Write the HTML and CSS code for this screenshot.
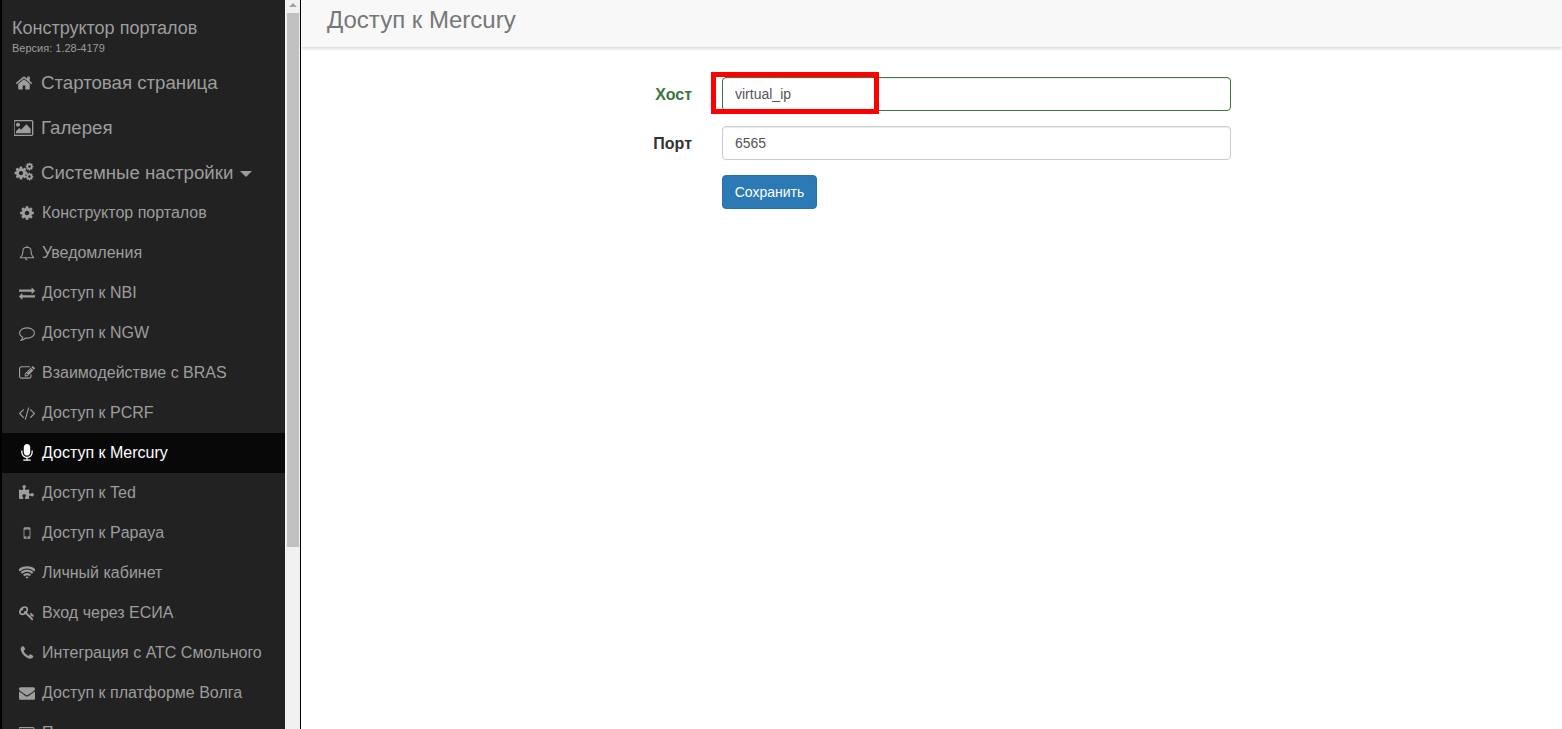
FILE: index.html
```html
<!DOCTYPE html>
<html lang="ru">
<head>
<meta charset="utf-8">
<title>Доступ к Mercury</title>
<link rel="stylesheet" href="styles.css">
</head>
<body>
<svg class="defs" xmlns="http://www.w3.org/2000/svg">
<symbol id="i-home" viewBox="0 0 1792 1792"><path d="M1472 992v480q0 26-19 45t-45 19h-384v-384h-256v384h-384q-26 0-45-19t-19-45v-480q0-1 .5-3t.5-3l575-474 575 474q1 2 1 6zm223-69l-62 74q-8 9-21 11h-3q-13 0-21-7l-692-577-692 577q-12 8-24 7-13-2-21-11l-62-74q-8-10-7-23.500t11-21.500l719-599q32-26 76-26t76 26l244 204v-195q0-14 9-23t23-9h192q14 0 23 9t9 23v408l219 182q10 8 11 21.500t-7 23.500z"/></symbol>
<symbol id="i-image" viewBox="0 128 1920 1536"><path d="M576 576q0 80-56 136t-136 56-136-56-56-136 56-136 136-56 136 56 56 136zm1024 384v448h-1408v-192l320-320 160 160 512-512zm96-704h-1600q-13 0-22.500 9.500t-9.500 22.500v1216q0 13 9.500 22.500t22.500 9.500h1600q13 0 22.500-9.500t9.500-22.500v-1216q0-13-9.500-22.500t-22.500-9.500zm160 32v1216q0 66-47 113t-113 47h-1600q-66 0-113-47t-47-113v-1216q0-66 47-113t113-47h1600q66 0 113 47t47 113z"/></symbol>
<symbol id="i-cog" viewBox="0 0 1792 1792"><path d="M1152 896q0-106-75-181t-181-75-181 75-75 181 75 181 181 75 181-75 75-181zm512-109v222q0 12-8 23t-20 13l-185 28q-19 54-39 91 35 50 107 138 10 12 10 25t-9 23q-27 37-99 108t-94 71q-12 0-26-9l-138-108q-44 23-91 38-16 136-29 186-7 28-36 28h-222q-14 0-24.500-8.500t-11.500-21.500l-28-184q-49-16-90-37l-141 107q-10 9-25 9-14 0-25-11-126-114-165-168-7-10-7-23 0-12 8-23 15-21 51-66.500t54-70.500q-27-50-41-99l-183-27q-13-2-21-12.500t-8-23.500v-222q0-12 8-23t19-13l186-28q14-46 39-92-40-57-107-138-10-12-10-24 0-10 9-23 26-36 98.500-107.500t94.500-71.500q13 0 26 10l138 107q44-23 91-38 16-136 29-186 7-28 36-28h222q14 0 24.500 8.500t11.500 21.500l28 184q49 16 90 37l142-107q9-9 24-9 13 0 25 10 129 119 165 170 7 8 7 22 0 12-8 23-15 21-51 66.500t-54 70.500q26 50 41 98l183 28q13 2 21 12.500t8 23.500z"/></symbol>
<symbol id="i-cogs" viewBox="0 0 1920 1920"><use href="#i-cog" x="-50" y="340" width="1440" height="1440"/><use href="#i-cog" x="1050" y="0" width="870" height="870"/><use href="#i-cog" x="1050" y="960" width="870" height="870"/></symbol>
<symbol id="i-bell" viewBox="0 0 1792 1792"><g fill="none" stroke="currentColor" stroke-width="120" stroke-linejoin="round" stroke-linecap="round"><path d="M896 260c-270 0-450 130-450 380 0 300-90 560-300 780h1500c-210-220-300-480-300-780 0-250-180-380-450-380z"/><path d="M896 120v140"/><path d="M720 1430c0 130 70 220 176 220"/></g></symbol>
<symbol id="i-exchange" viewBox="0 0 1792 1792"><path d="M1792 1184v192q0 13-9.500 22.500t-22.500 9.500h-1376v192q0 13-9.500 22.500t-22.500 9.500q-12 0-24-10l-319-320q-9-9-9-22 0-14 9-23l320-320q9-9 23-9 13 0 22.500 9.500t9.500 22.500v192h1376q13 0 22.500 9.500t9.500 22.500zm0-544q0 14-9 23l-320 320q-9 9-23 9-13 0-22.500-9.500t-9.500-22.500v-192h-1376q-13 0-22.500-9.500t-9.500-22.500v-192q0-13 9.500-22.500t22.500-9.500h1376v-192q0-14 9-23t23-9q12 0 24 10l319 319q9 9 9 23z"/></symbol>
<symbol id="i-comment" viewBox="0 0 1792 1792"><path d="M896 384q-204 0-381.500 69.500t-282 187.500-104.500 255q0 112 71.500 213.500t201.500 175.500l87 50-27 96q-24 91-70 172 152-63 275-171l43-38 57 6q69 8 130 8 204 0 381.500-69.500t282-187.500 104.500-255-104.500-255-282-187.500-381.500-69.500zm896 512q0 174-120 321.500t-326 233-450 85.500q-70 0-145-8-198 175-460 242-49 14-114 22h-5q-15 0-27-10.500t-16-27.500v-1q-3-4-.5-12t2-10 4.500-9.500l6-9 7-8.500 8-9q7-8 31-34.500t34.500-38 31-39.500 32.500-51 27-59 26-76q-157-89-247.500-220t-90.500-281q0-174 120-321.500t326-233 450-85.500 450 85.500 326 233 120 321.500z"/></symbol>
<symbol id="i-edit" viewBox="0 0 1792 1792"><path d="M888 1184l116-116-152-152-116 116v56h96v96h56zm440-720q-16-16-33 1l-350 350q-17 17-1 33t33-1l350-350q17-17 1-33zm80 594v190q0 119-84.500 203.500t-203.500 84.500h-832q-119 0-203.500-84.500t-84.500-203.500v-832q0-119 84.500-203.500t203.500-84.500h832q63 0 117 25 15 7 18 23 3 17-9 29l-49 49q-14 14-32 8-23-6-45-6h-832q-66 0-113 47t-47 113v832q0 66 47 113t113 47h832q66 0 113-47t47-113v-126q0-13 9-22l64-64q15-15 35-7t20 29zm-96-738l288 288-672 672h-288v-288zm444 132l-92 92-288-288 92-92q28-28 68-28t68 28l152 152q28 28 28 68t-28 68z"/></symbol>
<symbol id="i-code" viewBox="0 0 1792 1792"><path d="M553 1399l-50 50q-10 10-23 10t-23-10l-466-466q-10-10-10-23t10-23l466-466q10-10 23-10t23 10l50 50q10 10 10 23t-10 23l-393 393 393 393q10 10 10 23t-10 23zm591-1067l-373 1291q-4 13-15.500 19.500t-23.500 2.500l-62-17q-13-4-19.500-15.500t-2.500-24.500l373-1291q4-13 15.500-19.500t23.500-2.500l62 17q13 4 19.500 15.500t2.500 24.500zm657 651l-466 466q-10 10-23 10t-23-10l-50-50q-10-10-10-23t10-23l393-393-393-393q-10-10-10-23t10-23l50-50q10-10 23-10t23 10l466 466q10 10 10 23t-10 23z"/></symbol>
<symbol id="i-mic" viewBox="0 0 1792 1792"><path d="M1472 704v128q0 221-147.500 384.500t-364.500 187.500v132h256q26 0 45 19t19 45-19 45-45 19h-640q-26 0-45-19t-19-45 19-45 45-19h256v-132q-217-24-364.500-187.500t-147.500-384.500v-128q0-26 19-45t45-19 45 19 19 45v128q0 185 131.500 316.500t316.500 131.500 316.500-131.500 131.500-316.500v-128q0-26 19-45t45-19 45 19 19 45zm-256-384v512q0 132-94 226t-226 94-226-94-94-226v-512q0-132 94-226t226-94 226 94 94 226z"/></symbol>
<symbol id="i-puzzle" viewBox="0 0 1792 1792"><path d="M1664 1098q0 81-44.500 135t-123.500 54q-41 0-77.500-17.500t-59-38-56.500-38-71-17.500q-110 0-110 124 0 39 16 115t15 115v5q-22 0-33 1-34 3-97.500 11.500t-115.500 13.500-98 5q-61 0-103-26.500t-42-83.500q0-37 17.500-71t38-56.500 38-59 17.500-77.500q0-79-54-123.500t-135-44.500q-84 0-143 45.500t-59 127.500q0 43 15 83t33.500 64.500 33.500 53 15 50.500q0 45-46 89-37 35-117 35-95 0-245-24-9-2-27.500-4t-27.500-4l-13-2q-1 0-3-1-2 0-2-1v-1024q2 1 17.500 3.500t34 5 21.500 3.500q150 24 245 24 80 0 117-35 46-44 46-89 0-22-15-50.500t-33.500-53-33.500-64.500-15-83q0-82 59-127.500t144-45.500q80 0 134 44.500t54 123.500q0 41-17.500 77.500t-38 59-38 56.500-17.500 71q0 57 42 83.500t103 26.500q64 0 180-15t163-17v2q-1 2-3.500 17.500t-5 34-3.500 21.500q-24 150-24 245 0 80 35 117 44 46 89 46 22 0 50.500-15t53-33.500 64.500-33.500 83-15q82 0 127.500 59t45.500 143z"/></symbol>
<symbol id="i-mobile" viewBox="0 0 1792 1792"><path d="M976 1408q0-33-23.500-56.500t-56.500-23.500-56.500 23.500-23.500 56.500 23.500 56.500 56.500 23.500 56.500-23.500 23.500-56.500zm208-160v-704q0-13-9.500-22.500t-22.500-9.500h-512q-13 0-22.500 9.500t-9.500 22.500v704q0 13 9.500 22.500t22.500 9.500h512q13 0 22.500-9.500t9.500-22.500zm-192-848q0-16-16-16h-160q-16 0-16 16t16 16h160q16 0 16-16zm288-16v1024q0 52-38 90t-90 38h-512q-52 0-90-38t-38-90v-1024q0-52 38-90t90-38h512q52 0 90 38t38 90z"/></symbol>
<symbol id="i-wifi" viewBox="0 0 1792 1792"><path d="M896 1523q-20 0-93-73.500t-73-93.500q0-32 62.500-54t103.500-22 103.500 22 62.500 54q0 20-73 93.500t-93 73.500zm270-271q-2 0-40-25t-101.500-50-128.500-25-128.500 25-101 50-40.500 25q-18 0-93.500-75t-75.500-93q0-13 10-23 78-77 196-121t233-44 233 44 196 121q10 10 10 23 0 18-75.500 93t-93.500 75zm273-272q-11 0-23-8-136-105-252-154.500t-268-49.500q-85 0-170.500 22t-149 53-113.500 62-79 53-31 22q-17 0-92-75t-75-93q0-12 10-22 132-132 320-205t380-73 380 73 320 205q10 10 10 22 0 18-75 93t-92 75zm271-271q-11 0-22-9-179-157-371.500-236.500t-420.500-79.500-420.500 79.500-371.500 236.500q-11 9-22 9-17 0-92.500-75t-75.500-93q0-13 10-23 187-186 445-288t527-102 527 102 445 288q10 10 10 23 0 18-75.500 93t-92.500 75z"/></symbol>
<symbol id="i-key" viewBox="0 0 1792 1792"><path d="M832 512q0-80-56-136t-136-56-136 56-56 136q0 42 19 83-41-19-83-19-80 0-136 56t-56 136 56 136 136 56 136-56 56-136q0-42-19-83 41 19 83 19 80 0 136-56t56-136zm851 704q0 17-49 66t-66 49q-9 0-28.500-16t-36.500-33-38.500-40-24.500-26l-96 96 220 220q28 28 28 68 0 42-39 81t-81 39q-40 0-68-28l-671-671q-176 131-365 131-163 0-265.500-102.500t-102.500-265.500q0-160 95-313t248-248 313-95q163 0 265.500 102.500t102.500 265.500q0 189-131 365l355 355 96-96q-3-3-26-24.500t-40-38.500-33-36.500-16-28.500q0-17 49-66t66-49q13 0 23 10 6 6 46 44.500t82 79.500 86.500 86 73 78 28.500 41z"/></symbol>
<symbol id="i-phone" viewBox="0 0 1792 1792"><path d="M1600 1240q0 27-10 70.500t-21 68.500q-21 50-122 106-94 51-186 51-27 0-53-3.500t-57.500-12.500-47-14.500-55.500-20.500-49-18q-98-35-175-83-127-79-264-216t-216-264q-48-77-83-175-3-9-18-49t-20.500-55.500-14.500-47-12.500-57.500-3.500-53q0-92 51-186 56-101 106-122 25-11 68.500-21t70.500-10q14 0 21 3 18 6 53 76 11 19 30 54t35 63.500 31 53.500q3 4 17.500 25t21.500 35.500 7 28.500q0 20-28.500 50t-62 55-62 53-28.500 46q0 9 5 22.500t8.500 20.500 14 24 11.500 19q76 137 174 235t235 174q2 1 19 11.500t24 14 20.500 8.500 22.500 5q18 0 46-28.500t53-62 55-62 50-28.500q14 0 28.500 7t35.500 21.500 25 17.500q25 15 53.500 31t63.500 35 54 30q70 35 76 53 3 7 3 21z"/></symbol>
<symbol id="i-envelope" viewBox="0 0 1792 1792"><path d="M1792 710v794q0 66-47 113t-113 47h-1472q-66 0-113-47t-47-113v-794q44 49 101 87 362 246 497 345 57 42 92.500 65.500t94.500 48 110 24.500h2q51 0 110-24.500t94.500-48 92.500-65.500q170-123 498-345 57-39 100-87zm0-294q0 79-49 151t-122 123q-376 261-468 325-10 7-42.500 30.500t-54 38-52 32.500-57.500 27-50 9h-2q-23 0-50-9t-57.500-27-52-32.500-54-38-42.500-30.500q-91-64-262-182.500t-205-142.500q-62-42-117-115.500t-55-136.500q0-78 41.500-130t118.500-52h1472q65 0 112.500 47t47.500 113z"/></symbol>
</svg>
<div class="app">
  <aside class="sidebar">
    <div class="brand">
      <div class="brand-title">Конструктор порталов</div>
      <div class="brand-version">Версия: 1.28-4179</div>
    </div>
    <nav class="nav">
      <a class="top"><svg class="ic-home"><use href="#i-home"/></svg>Стартовая страница</a>
      <a class="top"><svg class="ic-img"><use href="#i-image"/></svg>Галерея</a>
      <a class="top top-open"><svg class="ic-cogs"><use href="#i-cogs"/></svg>Системные настройки<span class="caret"></span></a>
      <a class="sub"><svg class="ic"><use href="#i-cog"/></svg>Конструктор порталов</a>
      <a class="sub"><svg class="ic"><use href="#i-bell"/></svg>Уведомления</a>
      <a class="sub"><svg class="ic"><use href="#i-exchange"/></svg>Доступ к NBI</a>
      <a class="sub"><svg class="ic"><use href="#i-comment"/></svg>Доступ к NGW</a>
      <a class="sub"><svg class="ic"><use href="#i-edit"/></svg>Взаимодействие с BRAS</a>
      <a class="sub"><svg class="ic"><use href="#i-code"/></svg>Доступ к PCRF</a>
      <a class="sub active"><svg class="ic ic-mic"><use href="#i-mic"/></svg>Доступ к Mercury</a>
      <a class="sub"><svg class="ic"><use href="#i-puzzle"/></svg>Доступ к Ted</a>
      <a class="sub"><svg class="ic"><use href="#i-mobile"/></svg>Доступ к Papaya</a>
      <a class="sub"><svg class="ic"><use href="#i-wifi"/></svg>Личный кабинет</a>
      <a class="sub"><svg class="ic"><use href="#i-key"/></svg>Вход через ЕСИА</a>
      <a class="sub"><svg class="ic"><use href="#i-phone"/></svg>Интеграция с АТС Смольного</a>
      <a class="sub"><svg class="ic"><use href="#i-envelope"/></svg>Доступ к платформе Волга</a>
      <a class="sub"><svg class="ic-last"><use href="#i-image"/></svg>Почта</a>
    </nav>
  </aside>
  <div class="scrollbar">
    <div class="scroll-arrow"></div>
    <div class="scroll-thumb"></div>
  </div>
  <main class="main">
    <header class="page-header"><h1 class="page-title">Доступ к Mercury</h1></header>
    <form class="form">
      <label class="label label-ok">Хост</label>
      <div class="field">
        <input class="input input-ok" type="text" value="virtual_ip">
        <div class="highlight"></div>
      </div>
      <label class="label">Порт</label>
      <div class="field"><input class="input" type="text" value="6565"></div>
      <div class="field field-btn"><button class="btn" type="button">Сохранить</button></div>
    </form>
  </main>
</div>
</body>
</html>
```

FILE: styles.css
```css
* { box-sizing: border-box; }
html, body { margin: 0; height: 100%; overflow: hidden; }
body { font-family: "Liberation Sans", Arial, sans-serif; color: #333; background: #fff; }
.defs { display: none; }
.app { display: flex; height: 100vh; }

.sidebar { width: 285px; flex: none; background: #222; border-left: 2px solid #000; overflow: hidden; color: #9d9d9d; }
.brand { height: 60px; padding: 18px 0 0 10px; }
.brand-title { font-size: 18px; line-height: 20px; }
.brand-version { font-size: 11px; line-height: 12px; margin-top: 4px; }
.nav { display: flex; flex-direction: column; }
.top { display: flex; align-items: center; height: 45px; padding-left: 12px; font-size: 18.66px; }
.top-open { height: 43px; align-items: flex-start; padding-top: 12px; line-height: 21px; }
.top svg { fill: currentColor; flex: none; margin-right: 7px; }
.ic-home { width: 20px; height: 18px; }
.ic-img { width: 20px; height: 16px; }
.ic-cogs { width: 20px; height: 20px; }
.caret { width: 0; height: 0; margin: 9px 0 0 7px; border-left: 6px solid transparent; border-right: 6px solid transparent; border-top: 6px solid currentColor; }
.sub { display: flex; align-items: center; height: 40px; padding-left: 17px; font-size: 16px; }
.sub svg { fill: currentColor; flex: none; margin-right: 7px; }
.ic { width: 16px; height: 16px; }
.sub .ic-mic { width: 18px; height: 18px; margin: 0 6px 0 -1px; }
.ic-last { width: 16px; height: 13px; }
.active { background: #080808; color: #fff; }

.scrollbar { width: 16px; flex: none; background: #f1f1f1; border-right: 1px solid #000; padding: 0 1px 0 2px; display: flex; flex-direction: column; }
.scroll-arrow { width: 0; height: 0; margin: 3px auto 0; border-left: 4px solid transparent; border-right: 4px solid transparent; border-bottom: 4px solid #a3a3a3; }
.scroll-thumb { height: 534px; margin-top: 6px; background: #c1c1c1; }

.main { flex: 1; min-width: 0; }
.page-header { height: 47px; padding-left: 26px; background: #f8f8f8; box-shadow: 0 2px 3px rgba(0, 0, 0, .14); }
.page-title { margin: 0; font-size: 24px; font-weight: 400; line-height: 40px; color: #777; }

.form { width: 599px; margin: 30px auto 0; display: grid; grid-template-columns: 60px 509px; column-gap: 30px; row-gap: 15px; }
.label { height: 34px; font-size: 16px; font-weight: 700; line-height: 36px; text-align: right; color: #333; }
.label-ok { color: #3c763d; }
.field { position: relative; }
.field-btn { grid-column: 2; }
.input { display: block; width: 100%; height: 34px; padding: 6px 12px; font: 14px/20px "Liberation Sans", Arial, sans-serif; color: #555; background: #fff; border: 1px solid #ccc; border-radius: 4px; box-shadow: inset 0 1px 1px rgba(0, 0, 0, .075); }
.input-ok { border-color: #3c763d; }
.highlight { position: absolute; left: -11px; top: -5px; width: 168px; height: 42px; border: 5px solid #f00; }
.btn { display: block; width: 95px; height: 34px; padding: 6px 0; font: 14px/20px "Liberation Sans", Arial, sans-serif; text-align: center; color: #fff; background: #2b7ab5; border: 1px solid #2a6fa5; border-radius: 4px; }
```
